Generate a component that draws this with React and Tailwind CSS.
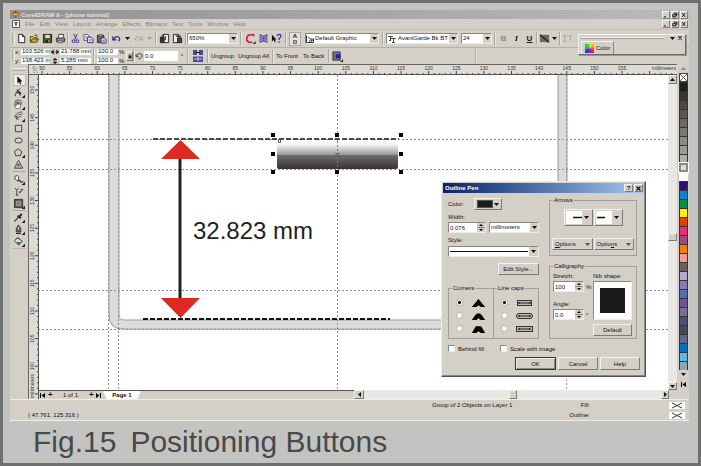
const menus = ["File", "Edit", "View", "Layout", "Arrange", "Effects", "Bitmaps", "Text", "Tools", "Window", "Help"];

const swatches = [
  "#1f1f1a", "#383532", "#4a4745", "#5a5755", "#6b6967", "#7b7977", "#8c8a88", "#9c9b9a", "#aeadac",
  "#dcdcdc", "#ffffff", "#2a0f75", "#0b84d8", "#0a9048", "#fff200", "#e63c00", "#ee2a7b", "#a04a80",
  "#f08200", "#f59a92", "#6e5f5c", "#b8a8d0", "#8a7ab4", "#5c6cb4", "#6c559c", "#7c6c98", "#48527c",
  "#484658", "#5f6c84", "#0070c0", "#5bb8ec", "#8aa8b8",
];

const raised = "border border-t-[#f4f2ee] border-l-[#f4f2ee] border-r-[#7d7a74] border-b-[#7d7a74] bg-[#d4d0c8]";
const sunken = "border border-t-[#8b8882] border-l-[#8b8882] border-r-[#efede8] border-b-[#efede8] bg-white";

const icons = {
  page: <path d="M3 1.5h4l2.500 2.500v6.500h-6.500zM7 1.500v2.500h2.500" fill="#fff" stroke="#222" />,
  open: (
    <>
      <path d="M1.500 10V4h3l1 1h3v2" fill="#e8d95c" stroke="#44400c" />
      <path d="M1.500 10l2-3.500h7L8.500 10z" fill="#c8b428" stroke="#44400c" />
      <path d="M6 2.500q2-1.500 3.500 1" fill="none" stroke="#222" />
    </>
  ),
  save: (
    <>
      <path d="M1.500 1.500h9v9h-9z" fill="#55552a" stroke="#1c1c10" />
      <path d="M3.500 2h5v3.500h-5z" fill="#d8d8cc" />
      <path d="M4 7.500h4.500V10H4z" fill="#222" />
      <path d="M7 8h1v2H7z" fill="#eee" />
    </>
  ),
  print: (
    <>
      <path d="M3.500 5l1-3.500h5L8.500 5" fill="#fff" stroke="#333" />
      <path d="M1.500 5.500h9v4h-9z" fill="#888" stroke="#333" />
      <path d="M3 8.500h5v2H3z" fill="#ddd" stroke="#333" strokeWidth=".7" />
    </>
  ),
  cut: (
    <>
      <path d="M4 1l3 6M8 1L5 7" fill="none" stroke="#33335f" />
      <circle cx="4" cy="9" r="1.600" fill="none" stroke="#2a2aa0" />
      <circle cx="8" cy="9" r="1.600" fill="none" stroke="#2a2aa0" />
    </>
  ),
  copy: (
    <>
      <path d="M1 1.500h4l1.500 1.500v5H1z" fill="#eee" stroke="#55557c" />
      <path d="M5 4.500h4l2 2v4H5z" fill="#eee" stroke="#2d2d90" />
      <path d="M6.500 7h3M6.500 8.500h3M2.500 4h2M2.500 5.500h2" stroke="#55557c" strokeWidth=".7" />
    </>
  ),
  paste: (
    <>
      <path d="M1.500 2.500h7v8h-7z" fill="#6c6c3c" stroke="#2a2a18" />
      <path d="M3.500 1.500h3v2h-3z" fill="#ddd" stroke="#333" strokeWidth=".7" />
      <path d="M5.500 5.500h3.500l2 2v3.500H5.500z" fill="#eee" stroke="#2d2d90" />
      <path d="M7 8h2.500M7 9.500h2.500" stroke="#2d2d90" strokeWidth=".7" />
    </>
  ),
  undo: <path d="M2 3.500v4h4M2.500 7q3-4.500 6-2.500q2 2 0 4.500" fill="none" stroke="#2c2c8c" strokeWidth="1.300" />,
  redo: <path d="M10 3.500v4H6M9.500 7q-3-4.500-6-2.500q-2 2 0 4.500" fill="none" stroke="#a19e98" />,
  imp: (
    <>
      <path d="M5 1.500h5.500v9H5z" fill="#eee" stroke="#222" />
      <path d="M1.500 4.500h4v6h-4z" fill="#333" stroke="#222" />
      <path d="M3 4q0-2.500 3-2.500M7 3.500v4l-1.500-1.500" fill="none" stroke="#222" />
    </>
  ),
  exp: (
    <>
      <path d="M1.500 1.500H7v9H1.500z" fill="#eee" stroke="#222" />
      <path d="M6 5.500h4.500v5H6z" fill="#444" stroke="#222" />
      <path d="M4 3.500h5v1.500" fill="none" stroke="#222" strokeWidth="1.300" />
    </>
  ),
  corel: (
    <>
      <path d="M9.500 3.500V2H7L3.500 2.500L2 5v3l2 2h4" fill="none" stroke="#cc1e2a" strokeWidth="1.700" />
      <path d="M11.500 9v3h-3z" fill="#111" />
    </>
  ),
  web: (
    <>
      <ellipse cx="6" cy="6" rx="4.500" ry="2" fill="none" stroke="#4444a4" transform="rotate(35 6 6)" />
      <ellipse cx="6" cy="6" rx="4.500" ry="2" fill="none" stroke="#4444a4" transform="rotate(-35 6 6)" />
      <path d="M1.500 2h2M8.500 2h2M1.500 10h2M8.500 10h2" stroke="#4444a4" />
      <circle cx="6" cy="6" r="1.200" fill="#222264" />
    </>
  ),
  help: (
    <>
      <path d="M1 2v7l1.800-1.500L4 10l1.200-.6L4.200 7H6z" fill="#111" />
      <path d="M6.500 3.500Q7 1.500 9 1.500t1.800 2Q10.500 5 8.800 6v1.500M8.800 9v1.500" fill="none" stroke="#3434a0" strokeWidth="1.400" />
    </>
  ),
  shape: (
    <>
      <path d="M2 10Q3 4 8 1.500" fill="none" stroke="#333" />
      <path d="M4 3l5 4-2.200.2L8 9.500" fill="#222" stroke="#222" />
      <path d="M4 5h2v2H4z" fill="#444" />
    </>
  ),
  hand: (
    <>
      <circle cx="5.500" cy="4.500" r="3.600" fill="none" stroke="#555" />
      <path d="M3 10L1.500 6.500h1.200L3.500 7.500V3.500h1v2.500V3h1v3V3.500h1V6l.5-1.500h1L8 8.500 7 10.500z" fill="#fff" stroke="#444" strokeWidth=".7" />
    </>
  ),
  brush: (
    <>
      <path d="M10 1Q4 1.500 2.500 5M10.500 3Q5 3.500 3 7M9 6Q6 6 4 9" fill="none" stroke="#555" />
      <path d="M1 5l3 .5L6.500 10 4 9z" fill="#555" />
    </>
  ),
  rect: <path d="M2.500 2.500h7v7h-7z" fill="none" stroke="#333" />,
  ellipse: <ellipse cx="6" cy="6" rx="4" ry="2.800" fill="none" stroke="#333" />,
  polygon: <path d="M5.500 2L9.500 5 8 9.500H3L1.500 5z" fill="none" stroke="#333" />,
  triangle: (
    <>
      <path d="M6 1.500L10.500 10h-9z" fill="#eee" stroke="#333" />
      <path d="M6 5L3.500 9.500M6 5l2.500 4.500M4 6.500h4M6 5v5" fill="none" stroke="#444" strokeWidth=".7" />
    </>
  ),
  fill: (
    <>
      <path d="M2 2.500q3-2 4 .5t-1 4.500l-3-2z" fill="#eee" stroke="#444" />
      <path d="M5 8q2-2 3 0t3 0" fill="none" stroke="#333" strokeWidth="1.400" />
    </>
  ),
  blend: <path d="M2 2l2 2.500L6 2M4 4.500V10M3 10h3M7 8L10.500 3.500M8 4h3M6 6.500h3" fill="none" stroke="#444" />,
  interactive: (
    <>
      <path d="M1.500 1.500h9v9h-9z" fill="#555" stroke="#333" />
      <path d="M3.500 3.500h5v5h-5z" fill="#858280" stroke="#b2b0ae" strokeWidth=".7" />
    </>
  ),
  dropper: (
    <>
      <path d="M1.500 10.500L6 5.500" stroke="#444" strokeWidth="1.400" />
      <path d="M5 4l3.500 3M6.500 5.500l3-3.500" stroke="#222" strokeWidth="2" />
    </>
  ),
  nib: (
    <>
      <path d="M6 1L3.500 5v3.500h5V5z" fill="#666" stroke="#333" />
      <path d="M3.500 9.500h5v1.500h-5z" fill="#222" />
      <path d="M6 3v3" stroke="#ddd" />
    </>
  ),
  bucket: (
    <>
      <path d="M1.500 5L5 2l5 3.500L6 10z" fill="#ddd" stroke="#333" />
      <path d="M3.500 3.500Q5 0 7 3" fill="none" stroke="#333" />
      <path d="M4 6.500h5L6 9.500z" fill="#555" />
    </>
  ),
  pointer: <path d="M4 1v8.500l2-1.800 1.300 3 1.400-.7-1.300-2.700H10z" fill="#111" />,
  outline: (
    <>
      <path d="M1 2h10v8H1z" fill="#6c6966" />
      <path d="M1 2l10 8" stroke="#222" strokeWidth="1.500" />
    </>
  ),
  lock: (
    <>
      <path d="M4 6V4q2-3 4 0v2" fill="none" stroke="#222" strokeWidth="1.300" />
      <path d="M3 5.500h6V11H3z" fill="#222" />
    </>
  ),
  rotate: <path d="M1.500 3v4h4M2 6.500Q4 1.500 8 2.500t2.500 4T7 10H5" fill="none" stroke="#333" strokeWidth="1.300" />,
  convert: (
    <>
      <path d="M1 1h8v9H1z" fill="#777" stroke="#333" />
      <path d="M4 3.500h5v4.500H4z" fill="#1e1ed0" />
      <path d="M12 9v3H9z" fill="#111" />
    </>
  ),
  para: <path d="M1 3h5M3 3v6M7 3h4M9 3v6M1 9h4" fill="none" stroke="#aaa7a1" />,
};

const tools = [
  ["pointer", "Pick"], ["shape", "Shape", 1], ["hand", "Zoom", 1], ["brush", "Freehand", 1], ["rect", "Rectangle"],
  ["ellipse", "Ellipse"], ["polygon", "Polygon", 1], ["triangle", "Shapes"], "gap-3", ["fill", "Interactive fill", 1],
  ["blend", "Transparency"], ["interactive", "Blend", 1], "gap-2", ["dropper", "Eyedropper", 1], ["nib", "Outline", 1], ["bucket", "Fill", 1],
];

function Icon({ name, size = "size-[11px]" }) {
  return (
    <svg viewBox="0 0 12 12" className={`${size} shrink-0`} aria-hidden="true">
      {icons[name]}
    </svg>
  );
}

function Tri({ dir = "down", color = "#111" }) {
  const paths = { down: "M0 1h5L2.500 4z", up: "M0 4h5L2.500 1z", left: "M4 0v5L1 2.500z", right: "M1 0v5l3-2.500z" };
  return (
    <svg viewBox="0 0 5 5" className="size-[5px] shrink-0" aria-hidden="true">
      <path d={paths[dir]} fill={color} />
    </svg>
  );
}

function Tool({ name, label }) {
  return (
    <button aria-label={label || name} className="flex h-[13px] w-[13px] shrink-0 items-center justify-center">
      <Icon name={name} />
    </button>
  );
}

function Arrow({ width, color }) {
  return (
    <button aria-label="More" className={`flex h-[13px] shrink-0 items-center justify-center ${width}`}>
      <Tri color={color} />
    </button>
  );
}

function Sep({ width = "w-[2px]" }) {
  return (
    <span className={`flex h-full shrink-0 justify-center ${width}`}>
      <span className="w-[2px] border-l border-l-[#aaa79f] border-r border-r-[#eae8e3]" />
    </span>
  );
}

function Grip() {
  return (
    <span className="flex h-[12px] w-[5px] shrink-0 gap-px pl-[2px]">
      <span className="w-px bg-[#b3b0a9]" />
      <span className="w-px bg-[#efede8]" />
    </span>
  );
}

function Combo({ label, value, width, icon, children }) {
  return (
    <span className={`flex h-[11px] shrink-0 items-center ${sunken} ${width}`}>
      {icon}
      <select aria-label={label} className="h-[9px] min-w-0 flex-1 appearance-none bg-transparent pl-px leading-[9px] outline-none">
        <option>{value}</option>
      </select>
      {children}
      <span className="flex h-[9px] w-[8px] shrink-0 items-center justify-center bg-[#d4d0c8]">
        <Tri />
      </span>
    </span>
  );
}

function Field({ label, value, className }) {
  return <input aria-label={label} defaultValue={value} className={`min-w-0 shrink-0 bg-white pl-px leading-[7px] outline-none ${className}`} />;
}

function WindowButtons() {
  const glyphs = [
    ["Minimize", "M1 6.500h3"],
    ["Restore", "M2.500 1.500h4v3h-1M1 3.500h4v3H1z"],
    ["Close", "M1.500 1.500l4 5M5.500 1.500l-4 5"],
  ];
  return (
    <div className="flex gap-px">
      {glyphs.map(([label, d]) => (
        <button key={label} aria-label={label} className={`flex size-[8px] items-center justify-center ${raised}`}>
          <svg viewBox="0 0 8 8" className="size-[6px]">
            <path d={d} fill="none" stroke="#111" strokeWidth="1.300" />
          </svg>
        </button>
      ))}
    </div>
  );
}

function TitleBar() {
  return (
    <header className="flex h-[9px] items-center bg-linear-to-r from-[#929292] to-[#bababa] pr-px pl-[2px]">
      <svg viewBox="0 0 8 8" className="mr-[2px] size-[7px]" aria-hidden="true">
        <path d="M1 2l3-2 3 2z" fill="#444" />
        <path d="M0 2h8L7 5H1z" fill="#e2491e" />
        <path d="M2 3h4v2H2z" fill="#f6d03c" />
        <path d="M2 5h4L4 8z" fill="#2463b0" />
      </svg>
      <h1 className="flex-1 font-bold text-[#e6e3dd]">CorelDRAW 9 - [phone tutorial]</h1>
      <WindowButtons />
    </header>
  );
}

function MenuBar() {
  return (
    <nav className="flex h-[11px] items-center border-b border-[#c2bfb7] pr-px pl-[2px] text-[#86837e]">
      <svg viewBox="0 0 8 8" className="mr-[5px] size-[8px]" aria-hidden="true">
        <path d="M.5.5h7v7h-7z" fill="#fff" stroke="#555" />
        <path d="M2 2h4L5 4H3z" fill="#d83c1e" />
        <path d="M3 4h2L4 6.500z" fill="#222" />
      </svg>
      <div className="flex flex-1 gap-[5px]">
        {menus.map((item) => (
          <button key={item}>{item}</button>
        ))}
      </div>
      <WindowButtons />
    </nav>
  );
}

function Toolbar() {
  return (
    <div className="flex h-[18px] items-center border-b border-[#b3b0a9] py-[2px]">
      <Grip />
      <Tool name="page" label="New" />
      <Tool name="open" />
      <Tool name="save" />
      <Tool name="print" />
      <Sep />
      <Tool name="cut" />
      <Tool name="copy" />
      <Tool name="paste" />
      <Sep />
      <Tool name="undo" />
      <Arrow width="w-[9px]" />
      <Tool name="redo" />
      <Arrow width="w-[9px]" color="#a19e98" />
      <Sep width="w-[4px]" />
      <Tool name="imp" label="Import" />
      <Tool name="exp" label="Export" />
      <Sep width="w-[3px]" />
      <Combo label="Zoom level" value="650%" width="w-[51px]" />
      <Sep width="w-[6px]" />
      <Tool name="corel" />
      <Tool name="web" />
      <Tool name="help" />
      <Sep width="w-[6px]" />
      <button aria-label="Style" className="mr-[4px] flex h-[14px] w-[12px] shrink-0 flex-col items-center border border-[#aaa79f] bg-[#e4e1db] font-bold leading-[7px]">
        A
        <span className="size-[4px] border border-[#77746f] bg-[#b3b0a9]" />
      </button>
      <Combo
        label="Style"
        value="Default Graphic"
        width="w-[74px]"
        icon={
          <svg viewBox="0 0 8 8" className="size-[8px] shrink-0">
            <path d="M.5.5v7h7v-4M2 1.500l4 4M3 6h3V3" fill="none" stroke="#333" />
          </svg>
        }
      />
      <Sep width="w-[7px]" />
      <Combo
        label="Font"
        value="AvantGarde Bk BT"
        width="w-[72px]"
        icon={
          <svg viewBox="0 0 8 8" className="mx-px size-[8px] shrink-0">
            <path d="M0 1.500h5M2.500 1.500v4M1 5.500h2M3 3.500h5M5.500 3.500v4M4 7.500h3" fill="none" stroke="#444" />
          </svg>
        }
      />
      <span className="w-[3px] shrink-0" />
      <Combo label="Font size" value="24" width="w-[31px]" />
      <Sep width="w-[5px]" />
      <button className="w-[13px] shrink-0 text-[8px] font-bold text-[#8c8984]">B</button>
      <button className="w-[13px] shrink-0 font-serif text-[8px] font-bold italic">I</button>
      <button className="w-[13px] shrink-0 text-[8px] font-bold underline">U</button>
      <Sep />
      <Tool name="outline" />
      <Arrow width="w-[7px]" />
      <Sep width="w-[3px]" />
      <Tool name="para" />
    </div>
  );
}

function PropertyBar() {
  return (
    <div className="flex h-[16px] items-center py-px">
      <Grip />
      <div className="grid shrink-0 grid-cols-[6px_30px_9px_31px] items-center gap-y-px">
        <span>x:</span>
        <Field label="x" value="103.526 m" className="h-[6px] w-[29px]" />
        <svg viewBox="0 0 8 6" className="h-[6px] w-[8px]"><path d="M0 3l2.500-2v4zM8 3L5.500 1v4zM2 3h4" fill="#222" stroke="#222" strokeWidth=".5" /></svg>
        <Field label="Object width" value="21.788 mm" className="h-[6px] w-[31px]" />
        <span>y:</span>
        <Field label="y" value="138.423 m" className="h-[6px] w-[29px]" />
        <svg viewBox="0 0 8 6" className="h-[6px] w-[8px]"><path d="M4 0l2 2H2zM4 6l2-2H2zM4 2v2" fill="#222" stroke="#222" strokeWidth=".5" /></svg>
        <Field label="Object height" value="5.285 mm" className="h-[6px] w-[31px]" />
      </div>
      <Sep width="w-[6px]" />
      <div className="grid shrink-0 grid-cols-[22px_7px] items-center gap-y-px">
        <Field label="Horizontal scale" value="100.0" className="h-[6px] w-[21px]" />
        <span>%</span>
        <Field label="Vertical scale" value="100.0" className="h-[6px] w-[21px]" />
        <span>%</span>
      </div>
      <button aria-label="Lock ratio" className={`flex h-[10px] w-[7px] shrink-0 items-center justify-center ${raised}`}>
        <Icon name="lock" size="size-[6px]" />
      </button>
      <Sep width="w-[2px]" />
      <span className="pr-px"><Icon name="rotate" size="size-[8px]" /></span>
      <Field label="Rotation" value="0.0" className="h-[10px] w-[34px]" />
      <span className="w-[8px] shrink-0 text-center">°</span>
      <Sep width="w-[4px]" />
      <button aria-label="Mirror" className="flex w-[16px] shrink-0 justify-center">
        <svg viewBox="0 0 10 12" className="h-[12px] w-[10px]">
          <path d="M0 0h4v5H0zM6 0h4v5H6z" fill="#4b4b84" />
          <path d="M3 2.500h4" stroke="#111" />
          <path d="M0 6.500h10V12H0z" fill="#4b4ba0" />
          <path d="M1 9h8M5 7v4" stroke="#c4c4e8" />
        </svg>
      </button>
      <Sep width="w-[4px]" />
      <button className="ml-px w-[27px] shrink-0 text-left">Ungroup</button>
      <button className="w-[33px] shrink-0 text-left">Ungroup All</button>
      <Sep width="w-[4px]" />
      <button className="ml-px w-[27px] shrink-0 text-left">To Front</button>
      <button className="w-[24px] shrink-0 text-left">To Back</button>
      <Sep width="w-[4px]" />
      <button aria-label="Convert to curves" className="w-[144px] shrink-0 pl-px">
        <Icon name="convert" />
      </button>
      <Sep />
    </div>
  );
}

function ColorDocker() {
  return (
    <aside className="absolute top-[24px] right-[3px] h-[21px] w-[108px] border border-t-[#f4f2ee] border-l-[#f4f2ee] border-r-[#6d6a64] border-b-[#6d6a64] bg-[#d4d0c8] pl-[2px] shadow-[1px_1px_0_#9a9791]">
      <div className="flex h-[6px] items-center gap-[3px] pr-[3px]">
        <span className="mr-[3px] h-[2px] flex-1 border-t border-b border-t-[#f4f2ee] border-b-[#a29f99]" />
        <Tri />
        <svg viewBox="0 0 5 5" className="size-[4px]"><path d="M.5.500l4 4M4.500.500l-4 4" stroke="#111" strokeWidth="1.400" /></svg>
      </div>
      <button className="flex h-[13px] items-center gap-[2px] border-r border-r-[#8b8882] border-l border-l-[#f4f2ee] border-t border-t-[#f4f2ee] px-[3px]">
        <span className="size-[9px] bg-[conic-gradient(from_20deg,#f0e020,#ff8a10,#f01860,#b010e0,#2030e0,#10b0d0,#20d050,#f0e020)]" />
        Color
      </button>
    </aside>
  );
}

const MM = 5.524;

function TopRuler() {
  return (
    <svg className="block h-[10px] w-full bg-[#dedbd5]" fontSize="5" fill="#333">
      <path d="M3 3h6M5 1v7M6 4l3 4" stroke="#777" strokeDasharray="1 1" fill="none" />
      {Array.from({ length: 115 }, (_, i) => {
        const x = 13 + i * MM;
        return <path key={i} d={`M${x} ${i % 5 === 0 ? 6 : 8}V10`} stroke="#444" />;
      })}
      {Array.from({ length: 22 }, (_, i) => (
        <text key={i} x={13 + i * MM * 5} y="5" textAnchor="middle">{50 + i * 5}</text>
      ))}
      <text x="647" y="5" textAnchor="end">millimeters</text>
      <path d="M0 9.500h649" stroke="#555" />
    </svg>
  );
}

function SideRuler() {
  return (
    <svg className="block h-full w-[10px] shrink-0 bg-[#dedbd5]" fontSize="5" fill="#333">
      {Array.from({ length: 58 }, (_, i) => {
        const y = 4 + i * MM;
        return <path key={i} d={`M${i % 5 === 2 ? 6 : 8} ${y}H10`} stroke="#444" />;
      })}
      {Array.from({ length: 11 }, (_, i) => (
        <text key={i} transform={`translate(5 ${15 + i * MM * 5}) rotate(-90)`} textAnchor="middle">{150 - i * 5}</text>
      ))}
      <text transform="translate(5 323) rotate(-90)">millimeters</text>
      <path d="M9.500 0v324" stroke="#555" />
    </svg>
  );
}

function Drawing() {
  return (
    <svg className="block h-[315px] min-w-0 flex-1 bg-white" role="img" aria-label="Phone outline">
      <defs>
        <linearGradient id="key" x1="0" y1="0" x2="0" y2="1">
          <stop offset="0" stopColor="#fff" />
          <stop offset=".15" stopColor="#f0f0f0" />
          <stop offset=".48" stopColor="#9c9c9c" />
          <stop offset=".5" stopColor="#716d6c" />
          <stop offset="1" stopColor="#383232" />
        </linearGradient>
      </defs>
      <g transform="translate(-39 -75)">
        <path
          d="M109 70V315q0 14 14 14H553q14 0 14-14V70h-9V316q0 4-4 4H124q-5 0-5-5V70z"
          fill="#dcdcdc"
          stroke="#9a9a9e"
        />
        <g stroke="#8c8ca6" strokeDasharray="2 2">
          <path d="M38 139.500H668M38 169.500H668M38 290.500H668M38 329.500H668" />
          <path d="M108.500 75V390M118.500 75V390M337.500 75V390M566.500 75V390" />
        </g>
        <rect x="277" y="141" width="121" height="28" rx="2" fill="url(#key)" />
        <path d="M337.500 141v28" stroke="#77777f" strokeDasharray="2 2" />
        <path d="M153 139H399" stroke="#4a4a4a" strokeWidth="2" strokeDasharray="5 2" />
        <path d="M143 319H390" stroke="#111" strokeWidth="2" strokeDasharray="5 2" />
        <path d="M180 155V302" stroke="#222" strokeWidth="3" />
        <path d="M180.500 140L200 159H161zM180.500 318L200 298H161z" fill="#dd2a20" />
        {[135, 154, 172].flatMap((y) =>
          [273, 337, 401].map((x) =>
            x === 337 && y === 154 ? (
              <path key="center" d="M335.500 152.500l4 4m0-4l-4 4" stroke="#555" />
            ) : (
              <rect key={`${x}-${y}`} x={x - 2} y={y - 2} width="4" height="4" fill="#000" />
            )
          )
        )}
        <path d="M278.500 139.500h2v3h-2z" fill="#fff" stroke="#555" />
        <text x="193" y="239" fontSize="24" fill="#222">32.823 mm</text>
      </g>
    </svg>
  );
}

function ScrollButton({ dir, className }) {
  return (
    <button aria-label={`Scroll ${dir}`} className={`flex shrink-0 items-center justify-center ${raised} ${className}`}>
      <Tri dir={dir} />
    </button>
  );
}

function PageBar() {
  return (
    <div className="flex h-[9px]">
      <div className="flex w-[315px] shrink-0 items-center border-t border-[#555] pl-px">
        <button aria-label="First page" className="w-[8px]"><svg viewBox="0 0 5 5" className="size-[5px]"><path d="M0 0h1v5H0zM5 0v5L1.500 2.500z" /></svg></button>
        <button className="w-[15px] text-left text-[8px] font-bold">+</button>
        <span className="w-[26px]">1 of 1</span>
        <button className="w-[7px] text-left text-[8px] font-bold">+</button>
        <button aria-label="Last page" className="w-[7px]"><svg viewBox="0 0 5 5" className="size-[5px]"><path d="M4 0h1v5H4zM0 0v5l3.500-2.500z" /></svg></button>
        <button className="h-full w-[38px] bg-white text-center font-bold [clip-path:polygon(0_0,100%_0,90%_100%,10%_100%)]">Page 1</button>
      </div>
      <ScrollButton dir="left" className="h-[9px] w-[10px]" />
      <div className="flex flex-1 bg-[#e9e7e3]">
        <span className="flex-1" />
        <span className={`w-[8px] ${raised}`} />
        <span className="w-[144px]" />
      </div>
      <ScrollButton dir="right" className="h-[9px] w-[8px]" />
      <span className="w-[8px] bg-[#d4d0c8]" />
    </div>
  );
}

function Toolbox() {
  return (
    <div className="flex w-[18px] shrink-0 flex-col items-center pt-[4px]">
      <span className="mb-[3px] h-[3px] w-[14px] border-t border-b border-t-[#efede8] border-b-[#b3b0a9]" />
      {tools.map((tool) => {
        if (typeof tool === "string") {
          return (
            <span key={tool} className={`flex w-[14px] items-center ${tool === "gap-3" ? "h-[3px]" : "h-[2px]"}`}>
              <span className="h-px w-full bg-[#aaa79f]" />
            </span>
          );
        }
        const [name, label, flyout] = tool;
        return (
          <button
            key={name}
            aria-label={label}
            className={`flex h-[12px] w-[13px] items-center justify-center ${name === "pointer" ? "border border-[#bbb8b1] bg-[#efede9]" : ""}`}
          >
            <svg viewBox="0 0 13 12" className="h-[11px] w-[12px]">
              {icons[name]}
              {flyout && <path d="M13 8.500V12H9.500z" fill="#111" />}
            </svg>
          </button>
        );
      })}
      <span className="mt-px h-px w-[14px] bg-[#bbb8b1]" />
    </div>
  );
}

function Palette() {
  return (
    <div className="flex w-[12px] shrink-0 flex-col items-center">
      <span className="flex h-[9px] items-center"><Tri dir="up" color="#8b8882" /></span>
      <button aria-label="No color" className="size-[9px] border border-[#444] bg-white">
        <svg viewBox="0 0 7 7" className="block size-[7px]"><path d="M0 0l7 7M7 0L0 7" stroke="#333" strokeWidth=".8" /></svg>
      </button>
      {swatches.map((color, i) => (
        <button
          key={color}
          aria-label={color}
          className={`h-[9px] w-[9px] shrink-0 ${i === 9 ? "border-2 border-[#8b8882] outline outline-white" : i === 10 ? "border-x border-t border-white" : "border-x border-t border-[#33333a]"}`}
          style={{ backgroundColor: color }}
        />
      ))}
      <span className="flex h-[9px] items-center"><Tri /></span>
      <button aria-label="Expand palette" className="mt-[3px]">
        <svg viewBox="0 0 5 5" className="block size-[5px]"><path d="M0 0h1v5H0zM5 0v5L1.500 2.500z" /></svg>
      </button>
    </div>
  );
}

function NoneBox() {
  return (
    <svg viewBox="0 0 16 7" className="h-[7px] w-[16px] bg-white">
      <path d="M3 1l10 5M13 1L3 6" stroke="#333" />
    </svg>
  );
}

function StatusBar() {
  return (
    <footer className="grid h-[22px] grid-cols-[1fr_80px_82px_95px] grid-rows-[10px_10px] items-center border-t border-b border-[#f0eeea] pl-[18px]">
      <span />
      <span className="whitespace-nowrap">Group of 2 Objects on Layer 1</span>
      <span className="pr-[4px] text-right">Fill:</span>
      <span className="flex justify-end pr-[4px]"><NoneBox /></span>
      <span>( 47.761, 125.316 )</span>
      <span />
      <span className="pr-[4px] text-right">Outline:</span>
      <span className="flex justify-end pr-[4px]"><NoneBox /></span>
    </footer>
  );
}

function Group({ title, className, children }) {
  return (
    <fieldset className={`min-w-0 border border-[#a29f99] ${className}`}>
      <legend className="ml-[3px] h-[6px] px-px leading-[6px]">{title}</legend>
      {children}
    </fieldset>
  );
}

function Spinner({ id, value, width }) {
  return (
    <span className={`flex h-[11px] ${sunken} ${width}`}>
      <input id={id} defaultValue={value} className="min-w-0 flex-1 pl-px leading-[8px] outline-none" />
      <span className="flex w-[8px] flex-col">
        <button aria-label="Increase" className="flex h-[5px] items-center justify-center border-b border-[#8b8882] bg-[#d4d0c8]">
          <svg viewBox="0 0 4 2" className="h-[2px] w-[4px]"><path d="M0 2h4L2 0z" /></svg>
        </button>
        <button aria-label="Decrease" className="flex h-[4px] items-center justify-center bg-[#d4d0c8]">
          <svg viewBox="0 0 4 2" className="h-[2px] w-[4px]"><path d="M0 0h4L2 2z" /></svg>
        </button>
      </span>
    </span>
  );
}

const cornerShapes = [
  "M0 9L7.500 0L15 9H10L7.500 7L5 9z",
  "M0 9L3.500 4Q7.500-1 11.500 4L15 9H10L7.500 7L5 9z",
  "M0 9L4.500 1.500H10.500L15 9H10L7.500 7L5 9z",
];

function RadioRows({ name, kind }) {
  return (
    <div className="flex flex-col pt-[5px] pl-[7px]">
      {[0, 1, 2].map((i) => (
        <label key={i} className="flex h-[13px] items-center gap-[8px]">
          <input
            type="radio"
            name={name}
            aria-label={`${name} ${i + 1}`}
            defaultChecked={i === 0}
            className="size-[7px] appearance-none rounded-full border border-[#b3b0a9] bg-white checked:bg-[radial-gradient(circle,#000_1px,#fff_2px)]"
          />
          {kind === "corner" ? (
            <svg viewBox="0 0 15 9" className="h-[8px] w-[15px]"><path d={cornerShapes[i]} /></svg>
          ) : (
            <svg viewBox="0 0 17 6" className="h-[6px] w-[17px]">
              <rect x={i === 0 ? 1.5 : 0.5} y=".5" width={i === 0 ? 14 : 16} height="5" rx={i === 1 ? 2.5 : 0} fill="#bdbab3" stroke="#333" />
              <path d="M3 3h11" stroke="#222" />
              <path d="M2.500 2h1v2h-1zM13.500 2h1v2h-1z" />
            </svg>
          )}
        </label>
      ))}
    </div>
  );
}

function Check({ label, className }) {
  return (
    <label className={`flex items-center gap-[3px] whitespace-nowrap ${className}`}>
      <input type="checkbox" className={`size-[7px] appearance-none ${sunken}`} />
      {label}
    </label>
  );
}

function OutlinePen() {
  return (
    <section role="dialog" aria-label="Outline Pen" className="absolute top-[117px] right-[43px] w-[205px] border border-t-[#efede8] border-l-[#efede8] border-r-[#55524e] border-b-[#55524e] bg-[#d4d0c8] shadow-[inset_-1px_-1px_0_#8b8882]">
      <div className="mx-px mt-px flex h-[10px] items-center gap-px bg-linear-to-r from-[#0a246a] to-[#a6caf0] pr-px pl-[2px]">
        <h2 className="flex-1 font-bold text-white">Outline Pen</h2>
        <button aria-label="Help" className={`flex h-[8px] w-[9px] items-center justify-center font-bold leading-[6px] ${raised}`}>?</button>
        <button aria-label="Close" className={`flex h-[8px] w-[9px] items-center justify-center ${raised}`}>
          <svg viewBox="0 0 5 5" className="size-[5px]"><path d="M.5.500l4 4M4.500.500l-4 4" stroke="#111" strokeWidth="1.200" /></svg>
        </button>
      </div>
      <div className="flex gap-[10px] pl-[6px]">
        <div className="w-[91px] pt-[5px]">
          <div className="flex h-[12px] items-center">
            <span className="w-[26px]">Color:</span>
            <button aria-label="Outline color" className={`flex h-[12px] w-[28px] items-center justify-between px-[2px] ${raised}`}>
              <span className="h-[8px] w-[16px] border border-[#555] bg-[#1b1b1b]" />
              <Tri />
            </button>
          </div>
          <label htmlFor="width" className="mt-[3px] block">Width:</label>
          <div className="mt-px flex justify-between">
            <Spinner id="width" value="0.076" width="w-[38px]" />
            <Combo label="Units" value="millimeters" width="w-[50px]" />
          </div>
          <span className="mt-[3px] block">Style:</span>
          <div className={`mt-[2px] flex h-[11px] items-center ${sunken}`}>
            <select aria-label="Line style" className="mx-px h-px flex-1 appearance-none bg-[#111]" />
            <span className="flex h-[9px] w-[9px] items-center justify-center bg-[#d4d0c8]"><Tri /></span>
          </div>
          <button className={`mt-[6px] ml-[50px] block h-[12px] w-[41px] ${raised}`}>Edit Style...</button>
          <div className="mt-[10px] flex">
            <Group title="Corners" className="h-[54px] w-[46px]">
              <RadioRows name="corners" kind="corner" />
            </Group>
            <Group title="Line caps" className="h-[54px] w-[45px] border-l-0">
              <RadioRows name="caps" kind="cap" />
            </Group>
          </div>
        </div>
        <div className="w-[88px] pt-[4px]">
          <Group title="Arrows" className="h-[59px]">
            <div className="flex justify-center gap-px pt-[6px]">
              {["M7 6.500h9", "M1 6.500h8"].map((d) => (
                <button key={d} aria-label="Arrowhead" className={`flex h-[17px] w-[29px] items-center justify-between pr-[3px] pl-px ${raised}`}>
                  <svg viewBox="0 0 16 13" className="h-[13px] w-[16px] bg-white"><path d={d} stroke="#111" strokeWidth="1.500" /></svg>
                  <Tri />
                </button>
              ))}
            </div>
            <div className="mt-[12px] flex gap-px px-[2px]">
              <button className={`flex h-[12px] flex-1 items-center justify-between px-[2px] ${raised}`}>
                <span><u>O</u>ptions</span><Tri color="#55524e" />
              </button>
              <button className={`flex h-[12px] flex-1 items-center justify-between px-[2px] ${raised}`}>
                <span>Optio<u>n</u>s</span><Tri color="#55524e" />
              </button>
            </div>
          </Group>
          <Group title="Calligraphy" className="mt-[7px] h-[76px]">
            <div className="flex justify-between pt-[3px] pr-[4px] pl-[3px]">
              <div>
                <label htmlFor="stretch" className="block">Stretch:</label>
                <div className="mt-px flex items-center gap-[2px]">
                  <Spinner id="stretch" value="100" width="w-[31px]" />%
                </div>
                <label htmlFor="angle" className="mt-[8px] block">Angle:</label>
                <div className="mt-px flex items-center gap-[2px]">
                  <Spinner id="angle" value="0.0" width="w-[31px]" />°
                </div>
              </div>
              <div className="w-[39px]">
                <span className="block whitespace-nowrap">Nib shape:</span>
                <div className={`mt-px flex h-[39px] items-center justify-center ${sunken}`}>
                  <span className="size-[25px] bg-[#1b1b1b]" />
                </div>
                <button className={`mt-[4px] block h-[12px] w-full ${raised}`}>Default</button>
              </div>
            </div>
          </Group>
        </div>
      </div>
      <div className="mt-[5px] flex h-[9px] items-center pl-[6px]">
        <Check label="Behind fill" className="w-[52px]" />
        <Check label="Scale with image" />
      </div>
      <div className="mt-[4px] mb-[6px] flex justify-end gap-[2px] pr-[5px]">
        <button className="h-[13px] w-[41px] border border-[#333] bg-[#d4d0c8] shadow-[inset_1px_1px_0_#f4f2ee,inset_-1px_-1px_0_#8b8882]">OK</button>
        <button className={`h-[13px] w-[40px] ${raised}`}>Cancel</button>
        <button className={`h-[13px] w-[40px] ${raised}`}>Help</button>
      </div>
    </section>
  );
}

export default function App() {
  return (
    <div className="min-h-screen border-3 border-[#6f6f6f] bg-[#c3c3c1] pt-[7px] pr-[9px] pl-[7px] font-['Liberation_Sans',Arial,sans-serif] text-[6px] leading-[8px] text-[#111]">
      <div className="relative bg-[#d4d0c8]">
        <TitleBar />
        <MenuBar />
        <Toolbar />
        <PropertyBar />
        <ColorDocker />
        <main className="relative flex">
          <Toolbox />
          <div className="min-w-0 flex-1 border-t border-l border-[#666]">
            <TopRuler />
            <div className="flex h-[324px]">
              <SideRuler />
              <div className="flex min-w-0 flex-1 flex-col">
                <div className="flex">
                  <Drawing />
                  <div className="flex w-[9px] flex-col bg-[#e9e7e3]">
                    <ScrollButton dir="up" className="h-[9px] w-[9px]" />
                    <span className="flex-1" />
                    <span className={`h-[8px] ${raised}`} />
                    <span className="h-[141px]" />
                    <ScrollButton dir="down" className="h-[8px] w-[9px]" />
                  </div>
                </div>
                <PageBar />
              </div>
            </div>
          </div>
          <Palette />
          <OutlinePen />
        </main>
        <StatusBar />
      </div>
      <p className="flex gap-[14px] pt-[3px] pl-[23px] text-[30px] leading-[36px] text-[#494947]">
        <span>Fig.15</span>
        <span>Positioning Buttons</span>
      </p>
    </div>
  );
}
